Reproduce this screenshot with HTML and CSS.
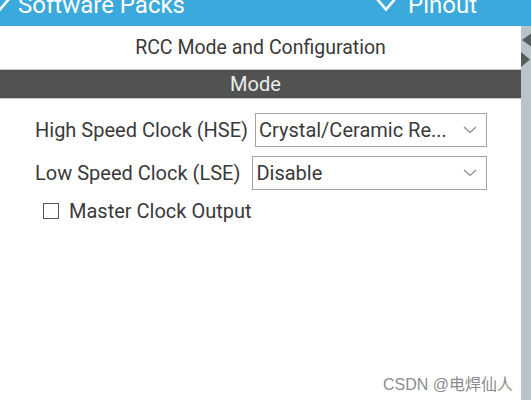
FILE: index.html
```html
<!DOCTYPE html>
<html>
<head>
<meta charset="utf-8">
<link rel="stylesheet" href="styles.css">
</head>
<body>
<div class="page">
  <div class="topbar">
    <div class="tab tab-left">
      <svg class="chev" width="20" height="14" viewBox="0 0 20 14"><path d="M1 -1 L10 9.5 L19 -1" fill="none" stroke="#fff" stroke-width="2.6"/></svg>
      <span>Software Packs</span>
    </div>
    <div class="tab tab-right">
      <svg class="chev" width="20" height="14" viewBox="0 0 20 14"><path d="M1 -1 L10 9.5 L19 -1" fill="none" stroke="#fff" stroke-width="2.6"/></svg>
      <span>Pinout</span>
    </div>
  </div>
  <div class="main">
    <div class="panel">
      <div class="title">RCC Mode and Configuration</div>
      <div class="section">Mode</div>
      <div class="form">
        <div class="row">
          <label class="lbl">High Speed Clock (HSE)</label>
          <div class="select">
            <span>Crystal/Ceramic Re...</span>
            <svg width="14" height="8" viewBox="0 0 14 8"><path d="M1 1 L7 6.5 L13 1" fill="none" stroke="#8a8a8a" stroke-width="1.2"/></svg>
          </div>
        </div>
        <div class="row row-wide">
          <label class="lbl">Low Speed Clock (LSE)</label>
          <div class="select">
            <span>Disable</span>
            <svg width="14" height="8" viewBox="0 0 14 8"><path d="M1 1 L7 6.5 L13 1" fill="none" stroke="#8a8a8a" stroke-width="1.2"/></svg>
          </div>
        </div>
        <div class="check-row">
          <span class="box"></span>
          <span>Master Clock Output</span>
        </div>
      </div>
    </div>
    <div class="strip">
      <svg width="10" height="36" viewBox="0 0 10 36"><polygon points="1,7 12,-1 12,15" fill="#565b5e"/><polygon points="0,19 9,26.5 0,34" fill="#565b5e"/></svg>
    </div>
  </div>
  <div class="watermark">CSDN @电焊仙人</div>
</div>
</body>
</html>
```

FILE: styles.css
```css
html, body {
  margin: 0;
  padding: 0;
  background: #fff;
}
.page {
  position: relative;
  width: 531px;
  height: 400px;
  overflow: hidden;
  font-family: Roboto, "Liberation Sans", sans-serif;
  color: #3a3a3a;
  display: flex;
  flex-direction: column;
}
.topbar {
  height: 26px;
  background: #3ba9dc;
  display: flex;
  overflow: hidden;
  color: #fff;
  font-size: 24px;
  line-height: 26px;
}
.tab {
  display: flex;
  align-items: flex-start;
  margin-top: -8px;
  white-space: nowrap;
}
.tab .chev {
  margin-top: 8px;
  flex: none;
}
.tab-left {
  margin-left: -10px;
  gap: 8px;
}
.tab-right {
  margin-left: auto;
  margin-right: 54px;
  gap: 12px;
}
.main {
  flex: 1;
  display: flex;
}
.panel {
  flex: 1;
  display: flex;
  flex-direction: column;
}
.title {
  height: 43px;
  line-height: 43px;
  text-align: center;
  font-size: 19.5px;
  border-bottom: 1px solid #c6c6c6;
}
.section {
  height: 28px;
  line-height: 28px;
  background: #515352;
  color: #ececec;
  text-align: center;
  font-size: 20px;
  border-bottom: 1px solid #c6c6c6;
  padding-right: 10px;
}
.form {
  padding: 14px 34px 0 35px;
  display: flex;
  flex-direction: column;
  gap: 9px;
  font-size: 20px;
}
.row {
  display: flex;
  align-items: center;
  gap: 7px;
}
.row-wide {
  gap: 12px;
}
.lbl {
  white-space: nowrap;
}
.select {
  flex: 1;
  height: 32px;
  border: 1px solid #a4a4a4;
  display: flex;
  align-items: center;
  justify-content: space-between;
  padding: 0 9px 0 3px;
  white-space: nowrap;
  overflow: hidden;
}
.check-row {
  display: flex;
  align-items: center;
  gap: 10px;
  padding-left: 8px;
}
.box {
  width: 14px;
  height: 14px;
  border: 1px solid #555;
  background: #fff;
}
.strip {
  width: 10px;
  background: #b9c4c9;
  padding-top: 7px;
  overflow: hidden;
}
.strip svg {
  display: block;
}
.watermark {
  position: absolute;
  left: 383px;
  top: 371px;
  font-family: "Liberation Sans", "Noto Sans CJK SC", sans-serif;
  font-size: 16px;
  color: #8c8c8c;
}
```
